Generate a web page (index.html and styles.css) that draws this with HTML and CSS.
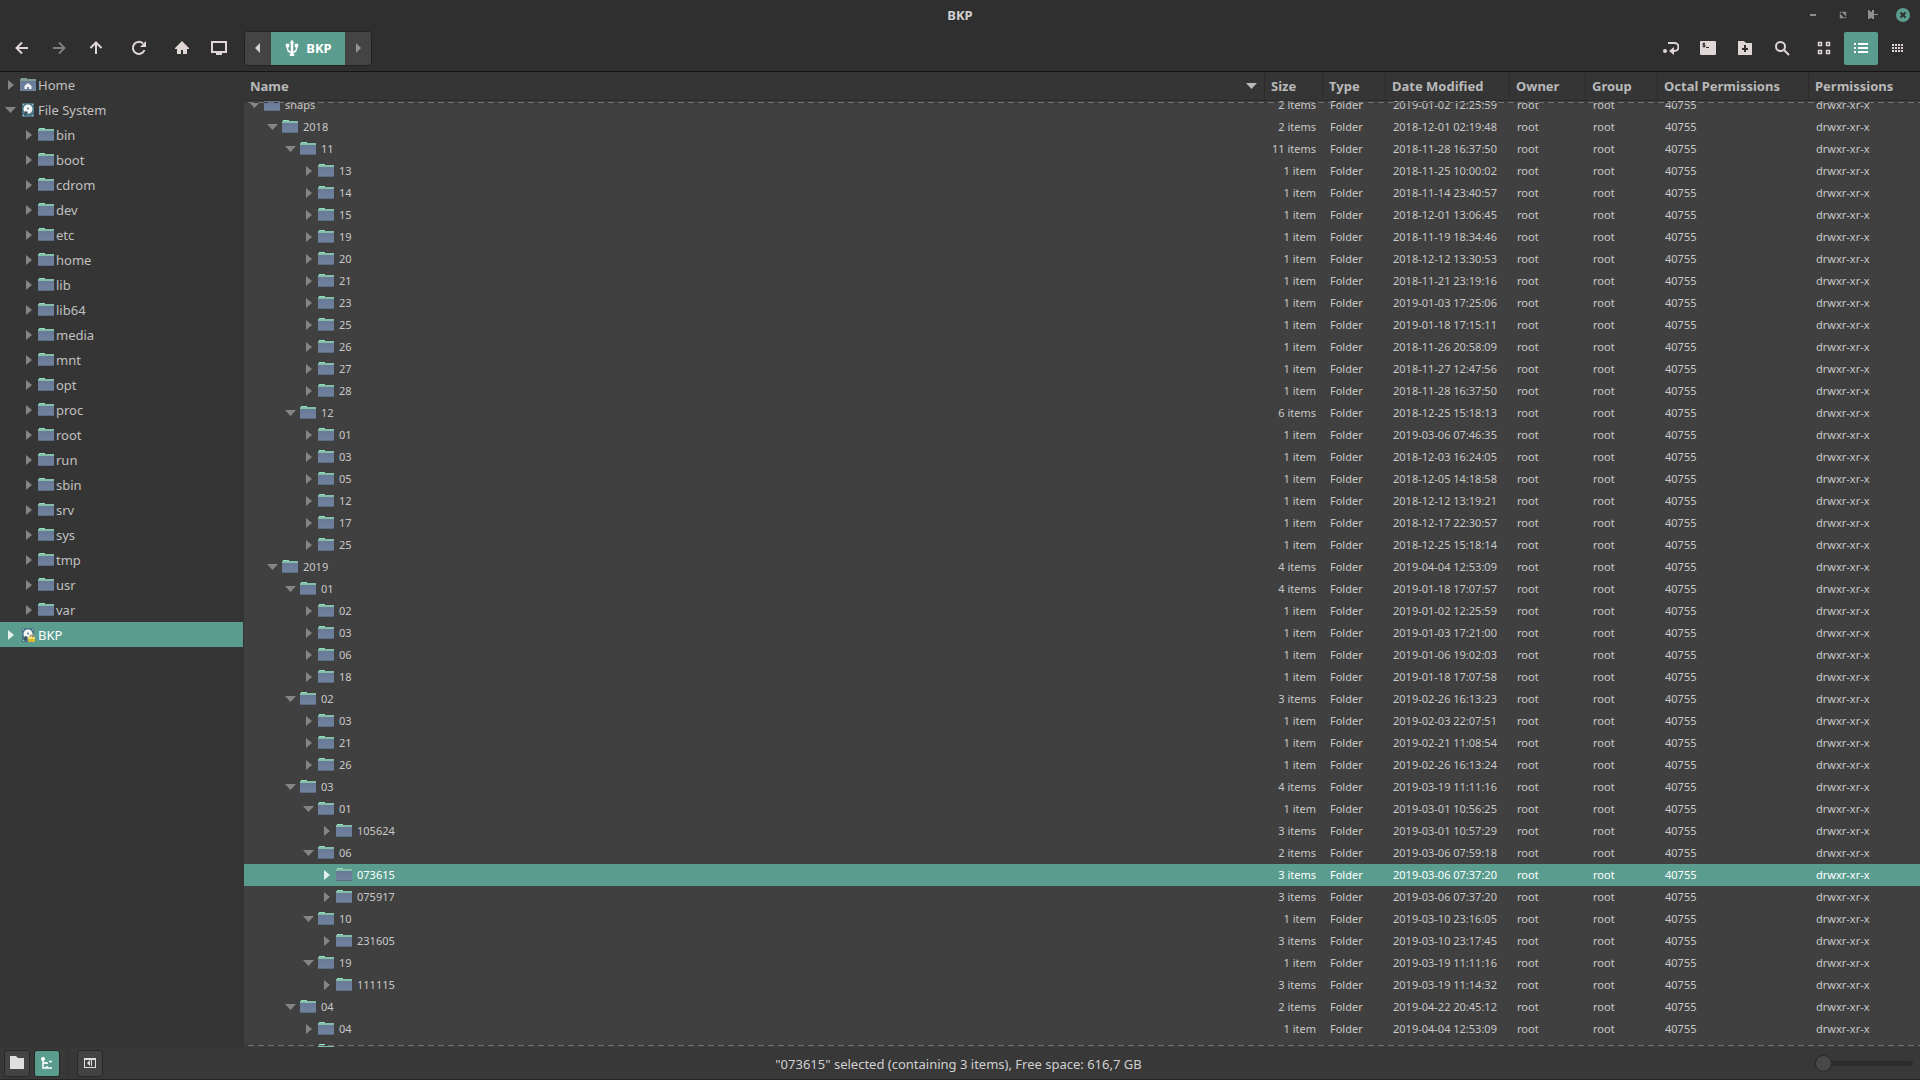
FILE: index.html
```html
<!DOCTYPE html>
<html lang="en">
<head>
<meta charset="utf-8">
<title>BKP</title>
<link rel="stylesheet" href="styles.css">
</head>
<body>
<svg class="sprite" aria-hidden="true">
  <linearGradient id="folder-fill" x1="0" y1="0" x2="0" y2="1">
    <stop offset="0" stop-color="#69799a"/><stop offset="1" stop-color="#70839c"/>
  </linearGradient>
  <symbol id="folder" viewBox="0 0 16 14">
    <path d="M0 2h16v11H0z" fill="url(#folder-fill)"/>
    <path d="M0 12h16v1H0z" fill="#5b6c84"/>
    <path d="M1 0h6v1h9v2H0V1h1z" fill="#83bfa6"/>
    <path d="M1 0h6v1H1z" fill="#97dcbb"/>
  </symbol>
  <symbol id="home-folder" viewBox="0 0 16 14">
    <path d="M0 2h16v11H0z" fill="url(#folder-fill)"/>
    <path d="M1 0h6v1h9v2H0V1h1z" fill="#7f9c8d"/>
    <path d="M8 5 4.500 8v3H7V9h2v2h2.500V8z" fill="#f2f2f2"/>
  </symbol>
  <symbol id="disk" viewBox="0 0 16 16">
    <rect x="2" y="1" width="12" height="14" rx="1" fill="#4a7688"/>
    <circle cx="8" cy="7" r="4.500" fill="#f5f7f7"/>
    <circle cx="8" cy="6.500" r="1" fill="#557f90"/>
    <path d="m4 13 1-4 3 1-2 3z" fill="#37505c"/>
    <path d="M3 2h1v1H3zM12 2h1v1h-1zM3 13h1v1H3zM12 13h1v1h-1z" fill="#b9cdd4"/>
  </symbol>
  <symbol id="disk-locked" viewBox="0 0 16 16">
    <use href="#disk" width="16" height="16"/>
    <path d="M10 10V9q2-2 4 0v2" fill="none" stroke="#b8a070" stroke-width="1.500"/>
    <rect x="8" y="10" width="7" height="5" fill="#d9b832"/>
    <path d="M8 10h7v2H8z" fill="#f1dd68"/>
  </symbol>
  <symbol id="closed" viewBox="0 0 12 12"><path d="M4 1v10l6-5z" fill="currentColor"/></symbol>
  <symbol id="open" viewBox="0 0 12 12"><path d="M1 3h11L6.500 9z" fill="currentColor"/></symbol>
</svg>

<header class="header">
  <div class="titlebar">
    <h1 class="title">BKP</h1>
    <div class="window-controls">
      <button aria-label="Minimize"><svg viewBox="0 0 16 16" width="16" height="16"><path d="M5 7h6v2H5z"/></svg></button>
      <button aria-label="Maximize"><svg viewBox="0 0 16 16" width="16" height="16"><path d="M7 5h4v4zM5 7v4h4zM5 5h1v1H5zM10 10h1v1h-1z" stroke="currentColor" stroke-width=".5"/></svg></button>
      <button aria-label="Pin"><svg viewBox="0 0 16 16" width="16" height="16"><path d="M3 3h1l2 2h1V3h2v4h4v1H9v4H7v-1H6l-2 1H3z"/></svg></button>
      <button class="close" aria-label="Close"><svg viewBox="0 0 16 16" width="16" height="16"><circle cx="8" cy="8" r="7"/><path d="m5.500 5.500 5 5m0-5-5 5" stroke="#2f2f2f" stroke-width="2"/></svg></button>
    </div>
  </div>
  <nav class="toolbar" aria-label="Toolbar">
    <div class="group">
      <button class="tool" aria-label="Back"><svg viewBox="0 0 16 16" width="16" height="16" class="line"><path d="M14 8H3M8 2.500 2.500 8 8 13.500"/></svg></button>
      <button class="tool dim" aria-label="Forward"><svg viewBox="0 0 16 16" width="16" height="16" class="line"><path d="M2 8h11M8 2.500 13.500 8 8 13.500"/></svg></button>
      <button class="tool" aria-label="Up"><svg viewBox="0 0 16 16" width="16" height="16" class="line"><path d="M8 14V3M2.500 8 8 2.500 13.500 8"/></svg></button>
    </div>
    <button class="tool" aria-label="Reload"><svg viewBox="0 0 16 16" width="16" height="16" class="line"><path d="M13.500 10A6 6 0 1 1 12 3.500"/><path d="M15 1v6H9z" fill="currentColor" stroke="none"/></svg></button>
    <div class="group">
      <button class="tool" aria-label="Home"><svg viewBox="0 0 16 16" width="16" height="16"><path d="M8 1 1 8v1h2v5h4v-4h2v4h4V9h2V8z"/></svg></button>
      <button class="tool" aria-label="Computer"><svg viewBox="0 0 16 16" width="16" height="16"><path fill-rule="evenodd" d="M0 1h16v12h-5v2H5v-2H0zm2 2v8h12V3z"/></svg></button>
    </div>
    <div class="pathbar">
      <button class="step" aria-label="Scroll left"><svg viewBox="0 0 12 12" width="12" height="12"><path d="M8 1v10L3 6z"/></svg></button>
      <button class="place"><svg viewBox="0 0 16 16" width="16" height="16"><path d="M8 0 6 3h1v8.500q-3-.5-3-3V7h1V4H2v3h1v1.500q0 4 4 4.500v1H6v2h4v-2H9v-1q4-.5 4-4.500V7h1V4h-3v3h1v1.500q0 2.500-3 3V3h1z" stroke="currentColor" stroke-width=".5"/></svg>BKP</button>
      <button class="step faint" aria-label="Scroll right"><svg viewBox="0 0 12 12" width="12" height="12"><path d="M4 1v10l5-5z"/></svg></button>
    </div>
    <div class="group actions">
      <button class="tool" aria-label="Toggle location entry"><svg viewBox="0 0 16 16" width="16" height="16"><circle cx="2" cy="11" r="2"/><path d="M5 3h6.500a3.500 3.500 0 0 1 0 8H9" fill="none" stroke="currentColor" stroke-width="2"/><path d="M6 11l5-4v8z"/></svg></button>
      <button class="tool" aria-label="Open terminal"><svg viewBox="0 0 16 16" width="16" height="16"><rect y="1" width="16" height="14" rx="1"/><path d="M5 3.500H3v1.500h2v1.500H2.500M4 2.500v5M6 7.500h3" fill="none" stroke="#2f2f2f"/></svg></button>
      <button class="tool" aria-label="New folder"><svg viewBox="0 0 16 16" width="16" height="16"><path fill-rule="evenodd" d="M1 1h6l2 2h6v12H1zm6 4v3H5v2h2v2h2v-2h2V8H9V5z"/></svg></button>
      <button class="tool" aria-label="Search"><svg viewBox="0 0 16 16" width="16" height="16" class="line"><circle cx="6.500" cy="6.500" r="4.500"/><path d="m10 10 5 5"/></svg></button>
    </div>
    <div class="group views">
      <button class="tool" aria-label="Icon view"><svg viewBox="0 0 16 16" width="16" height="16"><path fill-rule="evenodd" d="M2 2h4v4H2zm1 1v2h2V3zM10 2h4v4h-4zm1 1v2h2V3zM2 10h4v4H2zm1 1v2h2v-2zM10 10h4v4h-4zm1 1v2h2v-2z" stroke="currentColor" stroke-width=".5"/></svg></button>
      <button class="tool active" aria-label="List view"><svg viewBox="0 0 16 16" width="16" height="16"><path d="M1 3h2v2H1zM5 3h10v2H5zM1 7h2v2H1zM5 7h10v2H5zM1 11h2v2H1zM5 11h10v2H5z"/></svg></button>
      <button class="tool" aria-label="Compact view"><svg viewBox="0 0 16 16" width="16" height="16"><path d="M2 4h2v2H2zM5 4h2v2H5zM8 4h2v2H8zM11 4h2v2h-2zM2 7h2v2H2zM5 7h2v2H5zM8 7h2v2H8zM11 7h2v2h-2zM2 10h2v2H2zM5 10h2v2H5zM8 10h2v2H8zM11 10h2v2h-2z"/></svg></button>
    </div>
  </nav>
</header>

<main class="main">
  <aside class="sidebar"><ul class="places" id="places"></ul></aside>
  <section class="view">
    <div class="scroller" id="scroller">
      <table class="files">
        <colgroup><col><col class="c-size"><col class="c-type"><col class="c-date"><col class="c-owner"><col class="c-group"><col class="c-octal"><col class="c-perm"></colgroup>
        <thead>
          <tr><th><span class="sort">Name<svg width="12" height="12"><use href="#open"/></svg></span></th><th>Size</th><th>Type</th><th>Date Modified</th><th>Owner</th><th>Group</th><th>Octal Permissions</th><th>Permissions</th></tr>
        </thead>
        <tbody id="rows"></tbody>
      </table>
    </div>
  </section>
</main>

<footer class="statusbar">
  <div class="side-buttons">
    <button aria-label="Show places"><svg viewBox="0 0 16 16" width="16" height="16"><path d="M1 1h6l2 2h6v11H1z"/></svg></button>
    <button class="active" aria-label="Show treeview"><svg viewBox="0 0 16 16" width="16" height="16"><circle cx="4" cy="4" r="2"/><path d="M4 4v9h9M4 8h5M7 7v2M10 6.500h3M8 13v-2" fill="none" stroke="currentColor" stroke-width="1.500"/></svg></button>
    <span class="divider"></span>
    <button aria-label="Hide sidebar"><svg viewBox="0 0 16 16" width="16" height="16"><path fill-rule="evenodd" d="M2 3h12v10H2zm1 2v7h10V5z"/><path d="M8 5v6L5 8zM9 5h1v6H9z"/></svg></button>
  </div>
  <p class="status">"073615" selected (containing 3 items), Free space: 616,7 GB</p>
  <input class="zoom" type="range" min="0" max="100" value="0" aria-label="Zoom">
</footer>
<script src="app.js"></script>
</body>
</html>
```
FILE: styles.css
```css
* { box-sizing: border-box; }

html, body { height: 100%; }

body {
  margin: 0;
  display: flex;
  flex-direction: column;
  overflow: hidden;
  background: #353535;
  color: #c0c0c0;
  font: 13px/18px "Noto Sans", sans-serif;
}

button {
  display: flex;
  align-items: center;
  justify-content: center;
  margin: 0;
  padding: 0;
  border: 0;
  background: none;
  color: inherit;
  font: inherit;
}

svg { display: block; flex: none; fill: currentColor; }
.line { fill: none; stroke: currentColor; stroke-width: 2; }
.sprite { position: absolute; width: 0; height: 0; }

/* Title bar and toolbar */
.header {
  flex: none;
  background: #2f2f2f;
  border-bottom: 1px solid #151515;
}

.titlebar {
  display: grid;
  grid-template-columns: 1fr auto 1fr;
  align-items: center;
  height: 26px;
  padding: 3px 9px 0;
}

.title {
  grid-column: 2;
  margin: 0;
  color: #d0d0d0;
  font-size: 13px;
  font-weight: 700;
}

.window-controls {
  display: flex;
  justify-content: flex-end;
  gap: 14px;
  height: 20px;
  color: #8f8f8f;
}
.window-controls .close { color: #5a9d8f; }

.toolbar {
  display: flex;
  align-items: center;
  gap: 7px;
  height: 45px;
  padding: 0 5px 0 4px;
}

.group { display: flex; gap: 1px; }
.tool { width: 36px; height: 33px; padding-bottom: 1px; color: #e0d6d6; }
.tool.dim { color: #817c7c; }
.actions { margin-left: auto; }
.views { gap: 3px; }
.views .tool { width: 34px; }
.tool.active { background: #5a9d8f; border-radius: 2px; color: #fff; }

.pathbar {
  display: flex;
  height: 35px;
  border: 1px solid #232323;
  border-radius: 3px;
  background: #444;
}
.pathbar button { padding-bottom: 1px; }
.step { width: 26px; color: #d6cfcf; }
.step.faint { color: #969191; }
.pathbar .place {
  gap: 6px;
  width: 74px;
  background: #5a9d8f;
  color: #fff;
  font-weight: 700;
}

/* Sidebar tree */
.main { display: flex; flex: 1; min-height: 0; }

.sidebar {
  flex: none;
  width: 244px;
  border-right: 1px solid #323232;
}

.places { margin: 0; padding: 0; list-style: none; }
.places li {
  display: flex;
  align-items: center;
  height: 25px;
  padding-left: 4px;
}
.places .child { padding-left: 22px; }
.places .folder { margin: 0 2px 0 4px; }
.places .current { background: #5a9d8f; color: #fff; }
.places a { color: inherit; text-decoration: none; }

.toggle { color: #858585; }
.current .toggle, .selected .toggle { color: #e6f0ee; }

/* File list */
.view { position: relative; flex: 1; min-width: 0; background: #404040; }

/* Dashed marks show that the list goes on past each edge */
.view::before, .view::after {
  content: "";
  position: absolute;
  left: 0;
  right: 0;
  height: 1px;
  background: repeating-linear-gradient(90deg, #353535 0 4px, #707070 4px 10px);
}
.view::before { top: 30px; z-index: 2; }
.view::after { bottom: 1px; }

.scroller { height: 100%; overflow: auto; scrollbar-width: none; }

.files {
  width: 100%;
  border-collapse: separate;
  border-spacing: 0;
  table-layout: fixed;
  font-size: 11px;
  line-height: 16px;
}
.c-size { width: 58px; }
.c-type { width: 63px; }
.c-date { width: 124px; }
.c-owner { width: 76px; }
.c-group { width: 72px; }
.c-octal { width: 151px; }
.c-perm { width: 111px; }

.files th {
  position: sticky;
  top: 0;
  z-index: 1;
  height: 29px;
  padding: 0 6px;
  border-right: 1px solid #2b2b2b;
  border-bottom: 1px solid #2b2b2b;
  background: #353535;
  color: #b9b9b9;
  font-size: 13px;
  font-weight: 700;
  text-align: left;
  white-space: nowrap;
}
.files th:last-child { border-right: 0; }
.sort { display: flex; align-items: center; justify-content: space-between; }
.sort svg { margin-right: 1px; }

.files td {
  height: 22px;
  padding: 0 0 0 7px;
  color: #c8c8c8;
  white-space: nowrap;
}
.files td:nth-child(1) { padding-left: calc(4px + 18px * var(--level)); }
.files td:nth-child(2) { padding: 0 7px 0 0; text-align: right; }
.files .selected td { background: #5a9d8f; color: #fff; }
.name { display: flex; align-items: center; }
.name .folder { margin: 0 5px 0 4px; }

/* Status bar */
.statusbar {
  flex: none;
  display: grid;
  grid-template-columns: 1fr auto 1fr;
  align-items: center;
  height: 33px;
  padding: 0 7px 0 4px;
  border-bottom: 1px solid #262626;
  background: #383838;
}
.side-buttons { display: flex; align-items: center; gap: 4px; }
.side-buttons button {
  width: 26px;
  height: 27px;
  border: 1px solid #272727;
  border-radius: 3px;
  background: #434343;
  color: #dedede;
}
.side-buttons .active { background: #5a9d8f; color: #fff; }
.divider { width: 1px; height: 27px; margin: 0 4px; background: #303030; }
.status { margin: 0; padding-top: 2px; color: #d0d0d0; }

.zoom {
  justify-self: end;
  width: 98px;
  height: 18px;
  margin: 0;
  appearance: none;
  background: none;
}
.zoom::-webkit-slider-runnable-track {
  height: 5px;
  border-radius: 3px;
  background: #2b2b2b;
}
.zoom::-webkit-slider-thumb {
  appearance: none;
  width: 17px;
  height: 17px;
  margin-top: -6px;
  border: 1px solid #272727;
  border-radius: 50%;
  background: #484848;
}
```
FILE: app.js
```js
const directories = "bin boot cdrom dev etc home lib lib64 media mnt opt proc root run sbin srv sys tmp usr var".split(" ");

// level, name, item count, modified; a leading "+" marks an expanded folder
const files = `
0 +snaps 2 2019-01-02 12:25:59
1 +2018 2 2018-12-01 02:19:48
2 +11 11 2018-11-28 16:37:50
3 13 1 2018-11-25 10:00:02
3 14 1 2018-11-14 23:40:57
3 15 1 2018-12-01 13:06:45
3 19 1 2018-11-19 18:34:46
3 20 1 2018-12-12 13:30:53
3 21 1 2018-11-21 23:19:16
3 23 1 2019-01-03 17:25:06
3 25 1 2019-01-18 17:15:11
3 26 1 2018-11-26 20:58:09
3 27 1 2018-11-27 12:47:56
3 28 1 2018-11-28 16:37:50
2 +12 6 2018-12-25 15:18:13
3 01 1 2019-03-06 07:46:35
3 03 1 2018-12-03 16:24:05
3 05 1 2018-12-05 14:18:58
3 12 1 2018-12-12 13:19:21
3 17 1 2018-12-17 22:30:57
3 25 1 2018-12-25 15:18:14
1 +2019 4 2019-04-04 12:53:09
2 +01 4 2019-01-18 17:07:57
3 02 1 2019-01-02 12:25:59
3 03 1 2019-01-03 17:21:00
3 06 1 2019-01-06 19:02:03
3 18 1 2019-01-18 17:07:58
2 +02 3 2019-02-26 16:13:23
3 03 1 2019-02-03 22:07:51
3 21 1 2019-02-21 11:08:54
3 26 1 2019-02-26 16:13:24
2 +03 4 2019-03-19 11:11:16
3 +01 1 2019-03-01 10:56:25
4 105624 3 2019-03-01 10:57:29
3 +06 2 2019-03-06 07:59:18
4 073615 3 2019-03-06 07:37:20
4 075917 3 2019-03-06 07:37:20
3 +10 1 2019-03-10 23:16:05
4 231605 3 2019-03-10 23:17:45
3 +19 1 2019-03-19 11:11:16
4 111115 3 2019-03-19 11:14:32
2 +04 2 2019-04-22 20:45:12
3 04 1 2019-04-04 12:53:09
3 22 1 2019-04-22 20:45:12`.trim().split("\n");

const toggle = (open) =>
  `<button class="toggle" aria-label="${open ? "Collapse" : "Expand"}"><svg width="12" height="12"><use href="#${open ? "open" : "closed"}"/></svg></button>`;
const icon = (id, height) =>
  `<svg class="folder" width="16" height="${height}"><use href="#${id}"/></svg>`;
const place = (cls, open, id, height, name) =>
  `<li class="${cls}">${toggle(open)}${icon(id, height)}<a href="#">${name}</a></li>`;

document.getElementById("places").innerHTML =
  place("", false, "home-folder", 14, "Home") +
  place("", true, "disk", 16, "File System") +
  directories.map((name) => place("child", false, "folder", 14, name)).join("") +
  place("current", false, "disk-locked", 16, "BKP");

document.getElementById("rows").innerHTML = files.map((line) => {
  const [level, label, count, date, time] = line.split(" ");
  const open = label.startsWith("+");
  const name = label.replace("+", "");
  return `<tr class="${name === "073615" ? "selected" : ""}" style="--level:${level}">
    <td><div class="name">${toggle(open)}${icon("folder", 14)}${name}</div></td>
    <td>${count} ${count === "1" ? "item" : "items"}</td><td>Folder</td><td>${date} ${time}</td>
    <td>root</td><td>root</td><td>40755</td><td>drwxr-xr-x</td></tr>`;
}).join("");

document.getElementById("scroller").scrollTop = 7;
```
